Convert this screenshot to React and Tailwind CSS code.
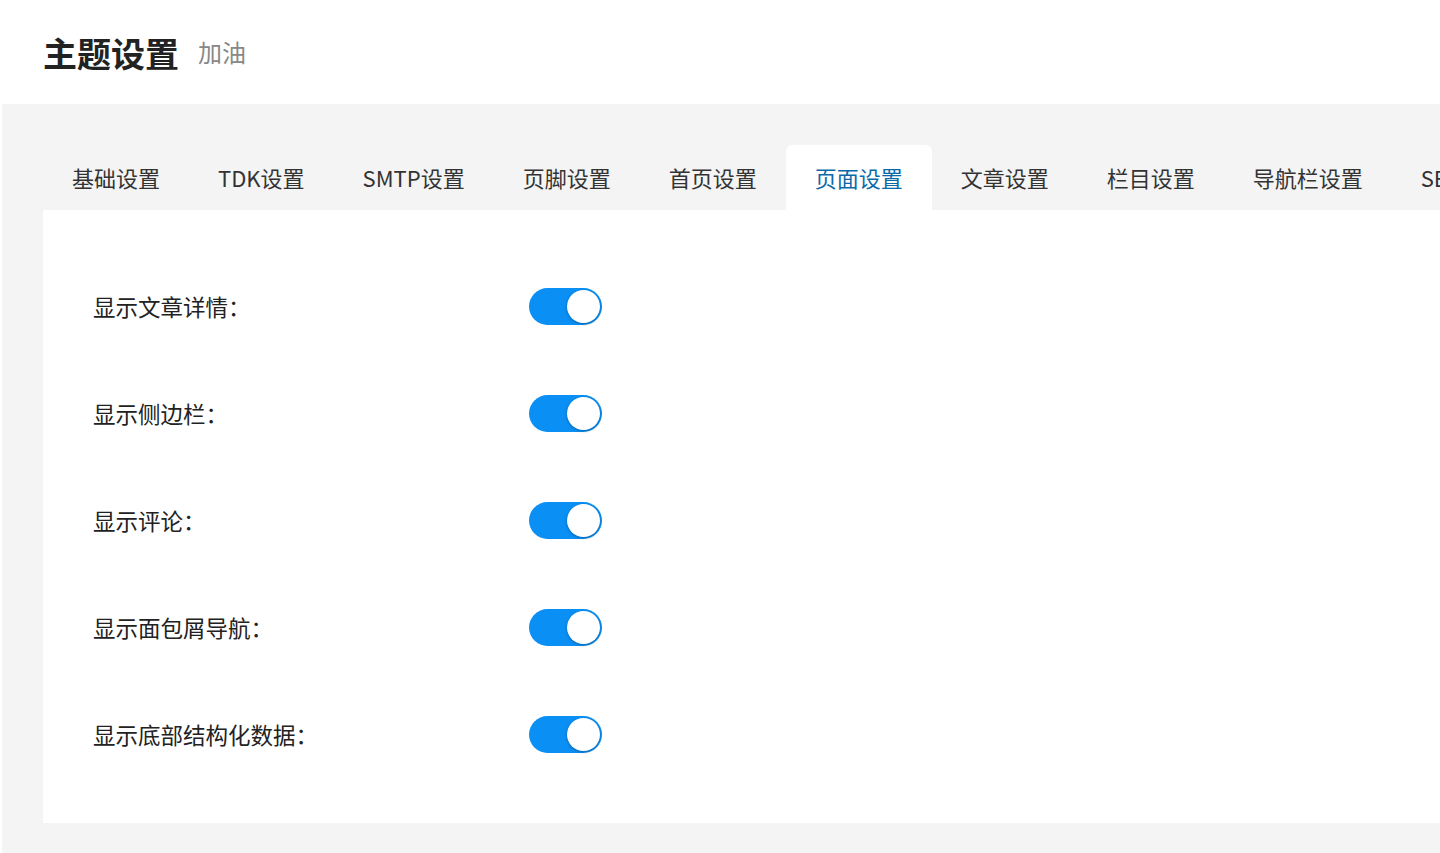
export default function App() {
  const tabs = ["基础设置","TDK设置","SMTP设置","页脚设置","首页设置","页面设置","文章设置","栏目设置","导航栏设置","SEO设置"];
  const rows = ["显示文章详情：","显示侧边栏：","显示评论：","显示面包屑导航：","显示底部结构化数据："];
  const f = { fontFamily: '"Noto Sans CJK SC", "Open Sans", sans-serif' };
  return (
    <div className="w-[1440px] h-[853px] overflow-hidden bg-white" style={f}>
      <div className="h-[104px] flex items-center pl-[43px] gap-[19px]">
        <span className="text-[34px] font-bold text-[#222]">主题设置</span>
        <span className="text-[24px] text-[#888]">加油</span>
      </div>
      <div className="ml-[2px] bg-[#f4f4f4] h-[749px] pt-[41px] pl-[41px]">
        <div className="flex h-[65px] whitespace-nowrap">
          {tabs.map((t, i) => (
            <div key={t} className={"px-[29px] flex items-center text-[22px] shrink-0 " + (i === 5 ? "bg-white rounded-t-[6px] text-[#0a6aa8]" : "text-[#333]")}>{t}</div>
          ))}
        </div>
        <div className="bg-white h-[613px] pt-[43px] pl-[50px]">
          {rows.map((r) => (
            <div key={r} className="h-[107px] flex items-center">
              <span className="w-[436px] text-[22.5px] text-[#222]">{r}</span>
              <div className="w-[73px] h-[37px] rounded-full bg-[#0a8ff5] relative">
                <div className="absolute right-[2px] top-[2px] w-[33px] h-[33px] rounded-full bg-white shadow-[0_1px_3px_rgba(0,0,0,0.3)]" />
              </div>
            </div>
          ))}
        </div>
      </div>
    </div>
  );
}
